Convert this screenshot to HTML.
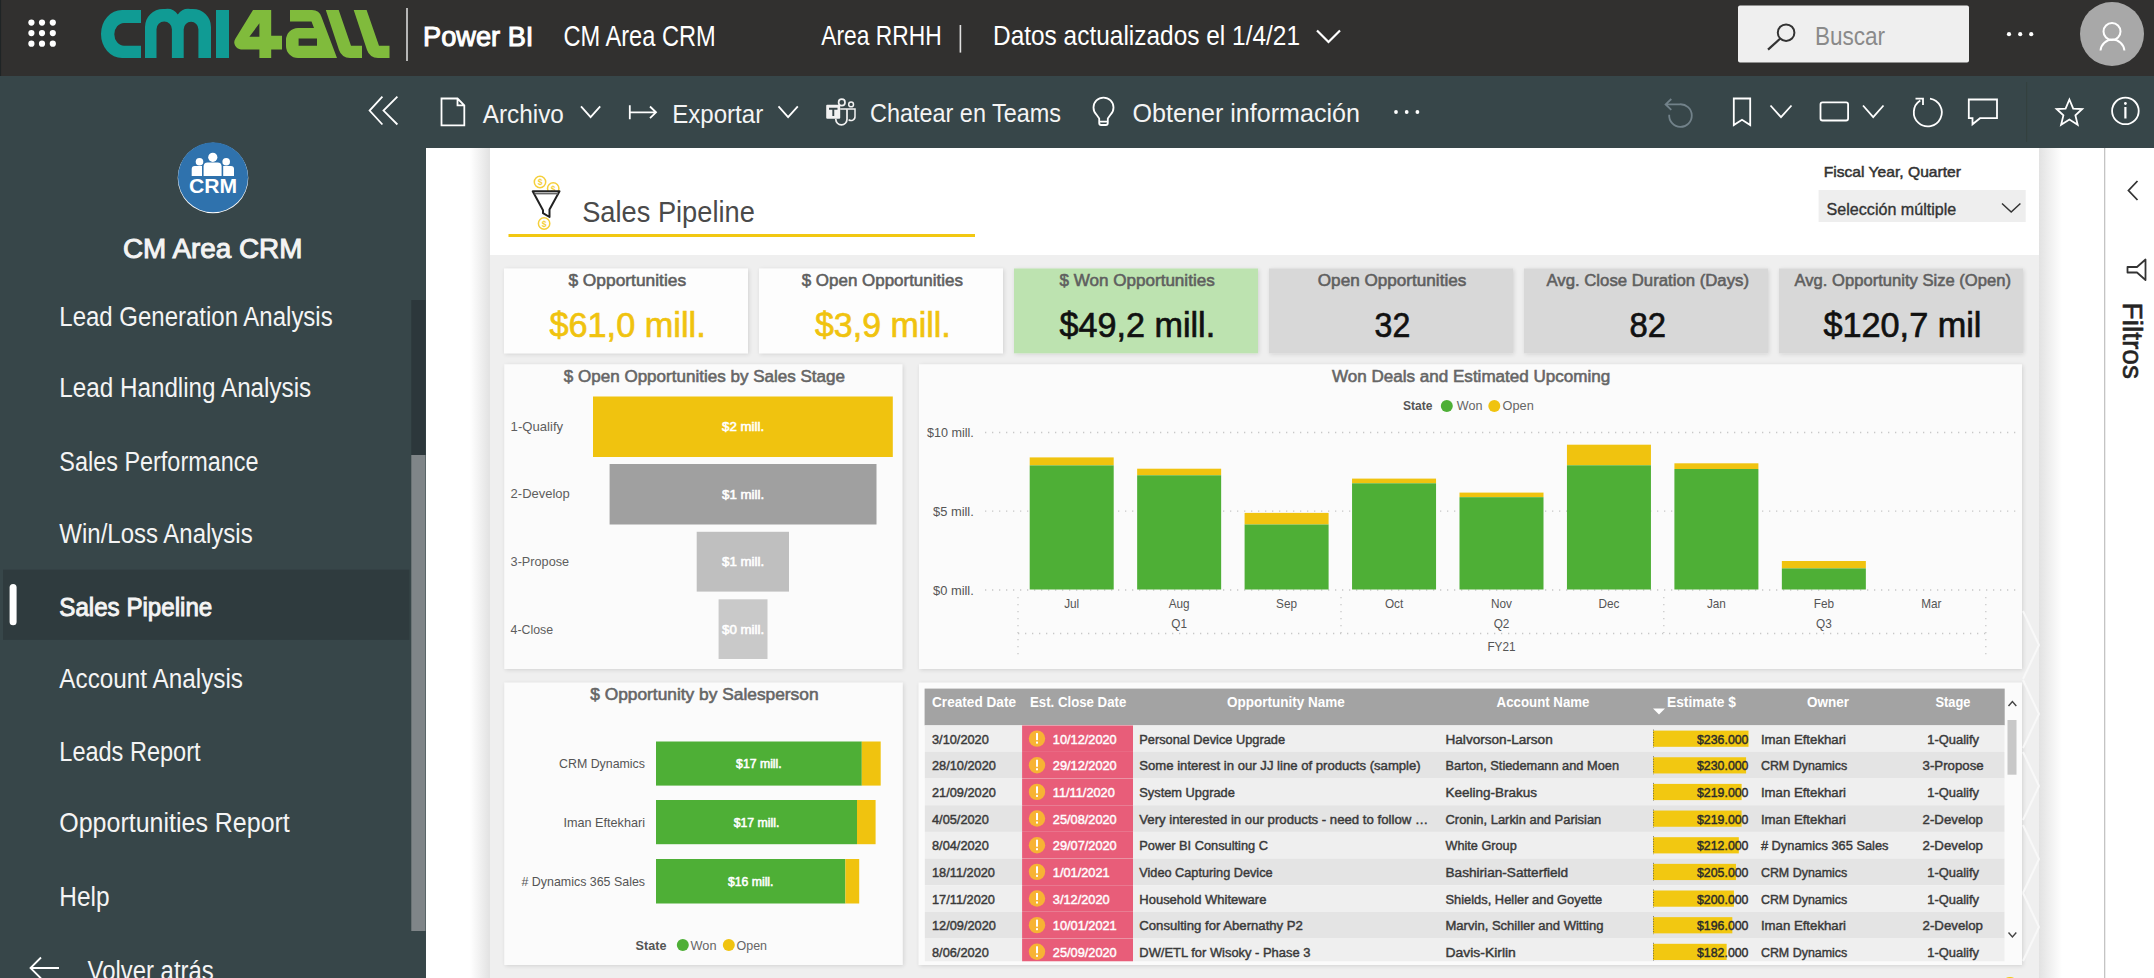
<!DOCTYPE html><html><head><meta charset="utf-8"><style>html,body{margin:0;padding:0;overflow:hidden;background:#fff}
svg{display:block;font-family:"Liberation Sans",sans-serif}</style></head><body>
<svg width="2154" height="978" viewBox="0 0 2154 978">
<rect x="0.00" y="0.00" width="2154.00" height="76.00" fill="#31302f" />
<rect x="0.00" y="0.00" width="1.10" height="978.00" fill="#1f2425" />
<rect x="0.00" y="76.00" width="2154.00" height="72.00" fill="#374649" />
<rect x="0.00" y="148.00" width="426.00" height="830.00" fill="#374649" />
<rect x="426.00" y="148.00" width="1728.00" height="830.00" fill="#ffffff" />
<circle cx="31.4" cy="22.6" r="3.1" fill="#fff"/>
<circle cx="31.4" cy="33.1" r="3.1" fill="#fff"/>
<circle cx="31.4" cy="43.7" r="3.1" fill="#fff"/>
<circle cx="42" cy="22.6" r="3.1" fill="#fff"/>
<circle cx="42" cy="33.1" r="3.1" fill="#fff"/>
<circle cx="42" cy="43.7" r="3.1" fill="#fff"/>
<circle cx="52.8" cy="22.6" r="3.1" fill="#fff"/>
<circle cx="52.8" cy="33.1" r="3.1" fill="#fff"/>
<circle cx="52.8" cy="43.7" r="3.1" fill="#fff"/>
<g fill="#109b94">
<path d="M141,10 H122 A21,24 0 0 0 101,34 A21,24 0 0 0 122,58 H141 V45.8 H124 A10,11.5 0 0 1 114.3,34.3 A10,11.5 0 0 1 124,22.9 H141 Z"/>
<path d="M145,58 V27 A18,18 0 0 1 163,9 H165 A13,13 0 0 1 177.8,14.5 A13,13 0 0 1 190.5,9 H193 A18,18 0 0 1 211,27 V58 H198.4 V29.2 A7.35,7.35 0 0 0 183.7,29.2 V58 H171.9 V29.2 A7.7,7.7 0 0 0 156.5,29.2 V58 Z"/>
<rect x="216" y="10" width="13" height="48"/>
</g>
<g fill="#80bb3c">
<path d="M253,10 H271.2 V35.8 H282 V49.4 H271.2 V58 H259.4 V49.4 H241 A7,7 0 0 1 235.5,38.5 Z M249.4,36.8 H259.4 V23.3 Z" fill-rule="evenodd"/>
<path d="M290,10 H312 A10,10 0 0 1 321.5,17 L337,58 H298 A12,12 0 0 1 286,46 V40 A12,12 0 0 1 298,28 H314 L311.5,21.5 H290 Z M298.6,38.6 H317 V45.8 H298.6 Z" fill-rule="evenodd"/>
<path d="M325.8,10 H338.7 L351,45.8 H362 V58 H350 A12,12 0 0 1 339,50 Z"/>
<path d="M353.7,10 H366.6 L379,45.8 H389.5 V58 H378 A12,12 0 0 1 367,50 Z"/>
</g>
<rect x="406.20" y="8.00" width="1.60" height="53.00" fill="#d8d8d8" />
<text x="423.00" y="45.50" font-size="27.62" fill="#fff" textLength="110.40" lengthAdjust="spacingAndGlyphs" stroke="#fff" stroke-width="1.0">Power BI</text>
<text x="563.40" y="45.50" font-size="28.63" fill="#fff" textLength="152.30" lengthAdjust="spacingAndGlyphs" >CM Area CRM</text>
<text x="821.30" y="44.80" font-size="26.89" fill="#fff" textLength="120.30" lengthAdjust="spacingAndGlyphs" >Area RRHH</text>
<rect x="959.60" y="25.00" width="1.60" height="27.60" fill="#e0e0e0" />
<text x="993.00" y="44.80" font-size="26.89" fill="#fff" textLength="307.00" lengthAdjust="spacingAndGlyphs" >Datos actualizados el 1/4/21</text>
<polyline points="1317,30.5 1328.5,42 1340,30.5" fill="none" stroke="#fff" stroke-width="2.2"/>
<rect x="1738" y="5.4" width="231" height="57" rx="2" fill="#efefef"/>
<circle cx="1786.1" cy="32.7" r="8.3" fill="none" stroke="#333" stroke-width="2"/>
<line x1="1780" y1="38.8" x2="1768" y2="49.6" stroke="#333" stroke-width="2.2"/>
<text x="1815.00" y="44.60" font-size="25.73" fill="#8a8a8a" textLength="70.10" lengthAdjust="spacingAndGlyphs" >Buscar</text>
<circle cx="2009" cy="34.2" r="2.1" fill="#fff"/>
<circle cx="2020.2" cy="34.2" r="2.1" fill="#fff"/>
<circle cx="2031.2" cy="34.2" r="2.1" fill="#fff"/>
<circle cx="2112" cy="34" r="32" fill="#a8a8a8"/>
<circle cx="2112" cy="31.5" r="8.5" fill="none" stroke="#fff" stroke-width="2"/>
<path d="M2100.5,50.5 A12,12 0 0 1 2124.4,50.5" fill="none" stroke="#fff" stroke-width="2"/>
<g fill="none" stroke="#fff" stroke-width="1.8">
<polyline points="382.4,96.7 369.6,110.6 382.4,124.5"/><polyline points="397.4,96.7 383.5,110.6 397.4,124.5"/>
<path d="M441.5,98.5 H457.5 L464.3,105.3 V125.3 H441.5 Z M457.5,98.5 V105.3 H464.3"/>
<polyline points="581,106.4 590.6,117.2 600.2,106.4"/>
<path d="M629.8,105.3 V119.2 M629.8,112.3 H656 M650,106.5 L656,112.3 L650,118.1"/>
<polyline points="778.5,106.4 788.1,117.2 797.8,106.4"/>
<path d="M1096.4,114.6 A10,10 0 1 1 1110.6,114.6 L1107.8,118.5 V123 A2,2 0 0 1 1105.8,125 H1101.2 A2,2 0 0 1 1099.2,123 V118.5 Z M1099.2,121.6 H1107.8"/>
</g>
<text x="482.80" y="122.60" font-size="25.29" fill="#f4f4f4" textLength="81.10" lengthAdjust="spacingAndGlyphs" >Archivo</text>
<text x="672.20" y="122.60" font-size="25.29" fill="#f4f4f4" textLength="91.00" lengthAdjust="spacingAndGlyphs" >Exportar</text>
<text x="870.00" y="122.20" font-size="25.29" fill="#f4f4f4" textLength="191.00" lengthAdjust="spacingAndGlyphs" >Chatear en Teams</text>
<text x="1132.60" y="122.20" font-size="25.29" fill="#f4f4f4" textLength="227.40" lengthAdjust="spacingAndGlyphs" >Obtener información</text>
<g fill="none" stroke="#f2f2f2">
<rect x="826.2" y="104.8" width="14" height="14" rx="1" fill="#f2f2f2" stroke="none"/>
<circle cx="841.8" cy="102.4" r="3.2" stroke-width="1.7"/>
<circle cx="851.1" cy="104.4" r="2.4" stroke-width="1.5"/>
<path d="M840.2,109 H847 V119.3 A5.6,5.6 0 0 1 835.8,119.3 V118.8" stroke-width="1.7"/>
<path d="M847.6,109 H855 V116.3 A3.9,3.9 0 0 1 848.6,119.6" stroke-width="1.5"/>
<path d="M829,108.7 H837.5 M833.3,108.7 V116" stroke="#374649" stroke-width="1.9"/>
</g>
<circle cx="1396" cy="112" r="1.9" fill="#fff"/>
<circle cx="1406.7" cy="112" r="1.9" fill="#fff"/>
<circle cx="1417.4" cy="112" r="1.9" fill="#fff"/>
<g fill="none" stroke="#fff" stroke-width="1.8">
<path d="M1733.8,98.5 H1750.2 V125 L1742,119.8 L1733.8,125 Z"/>
<polyline points="1770.5,105.5 1781,117.2 1791.5,105.5"/>
<rect x="1820.5" y="102.3" width="27.6" height="18.2" rx="2"/>
<polyline points="1863,105.5 1873.2,117.2 1883.5,105.5"/>
<path d="M1930,98.6 A14,14 0 1 1 1920.3,100.6 M1915.5,98.7 H1923 V105"/>
<path d="M1968.8,99.5 H1997 V118.2 H1980 L1972.5,124.3 V118.2 H1968.8 Z"/>
<path d="M2069.4,99.5 L2073.2,108.6 L2082.2,109 L2075.4,115.4 L2077.7,124.8 L2069.4,119.6 L2061.1,124.8 L2063.4,115.4 L2056.6,109 L2065.6,108.6 Z"/>
<circle cx="2125.4" cy="110.9" r="13.3"/>
</g>
<path d="M2125.4,107 V118.5" stroke="#fff" stroke-width="2.2"/><circle cx="2125.4" cy="103.5" r="1.4" fill="#fff"/>
<path d="M1669.2,114.8 A11.3,11.3 0 1 0 1679.6,104.3 H1666 M1671.3,99 L1665.6,104.4 L1671.3,109.8" fill="none" stroke="#72828a" stroke-width="1.8"/>
<rect x="2026.00" y="82.00" width="1.20" height="60.00" fill="#33403f" />
<circle cx="213" cy="178" r="35.3" fill="#fff"/>
<circle cx="213" cy="177.3" r="35" fill="#2f72ad"/>
<g fill="#fff"><circle cx="212.8" cy="157.3" r="4.6"/><circle cx="199.5" cy="161.8" r="3.8"/><circle cx="226.2" cy="161.8" r="3.8"/>
<path d="M203.6,176 V166 A4,4 0 0 1 207.6,162.6 H217.6 A4,4 0 0 1 221.6,166 V176 Z"/>
<path d="M191.7,176 V169 A3,3 0 0 1 194.7,166 H202 V176 Z"/><path d="M223.2,176 V166 H231 A3,3 0 0 1 234,169 V176 Z"/></g>
<text x="189.10" y="193.00" font-size="20.78" font-weight="bold" fill="#fff" textLength="48.10" lengthAdjust="spacingAndGlyphs" >CRM</text>
<text x="123.00" y="257.50" font-size="27.62" fill="#f4f4f4" textLength="179.40" lengthAdjust="spacingAndGlyphs" stroke="#f4f4f4" stroke-width="1.0">CM Area CRM</text>
<rect x="3.00" y="569.70" width="406.40" height="70.10" fill="#2f3b3e" />
<rect x="9.6" y="584" width="7" height="41.3" rx="3.5" fill="#fff"/>
<text x="59.30" y="325.60" font-size="26.74" fill="#f4f4f4" textLength="273.40" lengthAdjust="spacingAndGlyphs" >Lead Generation Analysis</text>
<text x="59.30" y="397.00" font-size="26.74" fill="#f4f4f4" textLength="251.90" lengthAdjust="spacingAndGlyphs" >Lead Handling Analysis</text>
<text x="59.30" y="470.60" font-size="26.74" fill="#f4f4f4" textLength="199.20" lengthAdjust="spacingAndGlyphs" >Sales Performance</text>
<text x="59.30" y="543.00" font-size="26.74" fill="#f4f4f4" textLength="193.40" lengthAdjust="spacingAndGlyphs" >Win/Loss Analysis</text>
<text x="59.30" y="615.70" font-size="25.87" fill="#f4f4f4" textLength="153.00" lengthAdjust="spacingAndGlyphs" stroke="#f4f4f4" stroke-width="0.95">Sales Pipeline</text>
<text x="59.30" y="688.00" font-size="26.74" fill="#f4f4f4" textLength="183.70" lengthAdjust="spacingAndGlyphs" >Account Analysis</text>
<text x="59.30" y="761.00" font-size="26.74" fill="#f4f4f4" textLength="141.20" lengthAdjust="spacingAndGlyphs" >Leads Report</text>
<text x="59.30" y="832.40" font-size="26.74" fill="#f4f4f4" textLength="230.50" lengthAdjust="spacingAndGlyphs" >Opportunities Report</text>
<text x="59.30" y="905.50" font-size="26.74" fill="#f4f4f4" textLength="50.20" lengthAdjust="spacingAndGlyphs" >Help</text>
<path d="M59,968 H31 M41,957.5 L30.5,968 L41,978.5" fill="none" stroke="#fff" stroke-width="1.8"/>
<text x="87.60" y="980.00" font-size="26.74" fill="#f4f4f4" textLength="126.10" lengthAdjust="spacingAndGlyphs" >Volver atrás</text>
<rect x="411.30" y="300.00" width="14.20" height="155.00" fill="#2c373b" />
<rect x="411.30" y="455.00" width="14.20" height="476.00" fill="#7f8588" />
<defs><linearGradient id="shl" x1="0" x2="1"><stop offset="0" stop-color="#fff"/><stop offset="1" stop-color="#e2e2e2"/></linearGradient><linearGradient id="shr" x1="0" x2="1"><stop offset="0" stop-color="#e2e2e2"/><stop offset="1" stop-color="#fff"/></linearGradient><filter id="sh" x="-5%" y="-5%" width="110%" height="115%"><feGaussianBlur in="SourceAlpha" stdDeviation="2.2"/><feOffset dx="0.5" dy="1"/><feComponentTransfer><feFuncA type="linear" slope="0.13"/></feComponentTransfer><feMerge><feMergeNode/><feMergeNode in="SourceGraphic"/></feMerge></filter></defs>
<rect x="470.00" y="148.00" width="20.00" height="830.00" fill="url(#shl)" />
<rect x="2039.00" y="148.00" width="23.00" height="830.00" fill="url(#shr)" />
<rect x="490.00" y="148.00" width="1549.00" height="107.00" fill="#ffffff" />
<rect x="490.00" y="255.00" width="1549.00" height="723.00" fill="#efefef" />
<rect x="2104.00" y="148.00" width="1.30" height="830.00" fill="#c4c4c4" />
<polyline points="2137.5,181 2128.5,190.5 2137.5,200" fill="none" stroke="#333" stroke-width="1.8"/>
<path d="M2145.5,259.5 V280 L2137,272.5 H2127.5 V267 H2137 Z" fill="none" stroke="#333" stroke-width="1.8" stroke-linejoin="round"/>
<text transform="translate(2122.6,302.5) rotate(90)" font-size="28.5" fill="#252423" stroke="#252423" stroke-width="0.6" textLength="76.5" lengthAdjust="spacingAndGlyphs">Filtros</text>
<g>
<circle cx="540" cy="182" r="5.7" fill="#fff" stroke="#f5cf3a" stroke-width="1.5"/>
<text x="540" y="185.3" font-size="8.5" font-weight="bold" fill="#f5cf3a" text-anchor="middle">$</text>
<circle cx="553.2" cy="188.5" r="5.7" fill="#fff" stroke="#f5cf3a" stroke-width="1.5"/>
<text x="553.2" y="191.8" font-size="8.5" font-weight="bold" fill="#f5cf3a" text-anchor="middle">$</text>
<circle cx="544.1" cy="223.5" r="5.7" fill="#fff" stroke="#f5cf3a" stroke-width="1.5"/>
<text x="544.1" y="226.8" font-size="8.5" font-weight="bold" fill="#f5cf3a" text-anchor="middle">$</text>
<path d="M532.7,191.3 H559.5 L549.5,209.5 V217 L543,213.2 V210.2 Z" fill="#fff" stroke="#222" stroke-width="2" stroke-linejoin="round"/>
<line x1="534.5" y1="193.6" x2="558" y2="193.6" stroke="#666" stroke-width="1.6"/>
</g>
<text x="582.20" y="221.70" font-size="29.80" fill="#4a4a4a" textLength="172.60" lengthAdjust="spacingAndGlyphs" >Sales Pipeline</text>
<rect x="508.50" y="234.00" width="466.50" height="3.00" fill="#f2c811" />
<text x="1823.70" y="176.80" font-size="14.97" fill="#333" textLength="137.30" lengthAdjust="spacingAndGlyphs" stroke="#333" stroke-width="0.5">Fiscal Year, Quarter</text>
<rect x="1818.60" y="190.00" width="207.10" height="32.00" fill="#eeeeee" />
<text x="1826.60" y="215.00" font-size="16.28" fill="#333" textLength="129.70" lengthAdjust="spacingAndGlyphs" stroke="#333" stroke-width="0.35">Selección múltiple</text>
<polyline points="2002,203.5 2011.2,212 2020.4,203.5" fill="none" stroke="#333" stroke-width="1.5"/>
<rect x="504" y="268.5" width="244" height="84.8" fill="#fdfdfd" filter="url(#sh)"/>
<text x="568.40" y="285.80" font-size="15.99" fill="#5f5f5f" textLength="117.70" lengthAdjust="spacingAndGlyphs" stroke="#5f5f5f" stroke-width="0.55">$ Opportunities</text>
<text x="549.40" y="336.60" font-size="35.61" fill="#f0c30f" textLength="156.30" lengthAdjust="spacingAndGlyphs" stroke="#f0c30f" stroke-width="0.7">$61,0 mill.</text>
<rect x="759" y="268.5" width="244" height="84.8" fill="#fdfdfd" filter="url(#sh)"/>
<text x="801.70" y="285.80" font-size="15.99" fill="#5f5f5f" textLength="161.20" lengthAdjust="spacingAndGlyphs" stroke="#5f5f5f" stroke-width="0.55">$ Open Opportunities</text>
<text x="815.00" y="336.60" font-size="35.61" fill="#f0c30f" textLength="135.80" lengthAdjust="spacingAndGlyphs" stroke="#f0c30f" stroke-width="0.7">$3,9 mill.</text>
<rect x="1014" y="268.5" width="244" height="84.8" fill="#bde3b0" filter="url(#sh)"/>
<text x="1059.50" y="285.80" font-size="15.99" fill="#5f5f5f" textLength="155.20" lengthAdjust="spacingAndGlyphs" stroke="#5f5f5f" stroke-width="0.55">$ Won Opportunities</text>
<text x="1059.50" y="336.60" font-size="35.61" fill="#111" textLength="155.70" lengthAdjust="spacingAndGlyphs" stroke="#111" stroke-width="0.7">$49,2 mill.</text>
<rect x="1269" y="268.5" width="244" height="84.8" fill="#d8d8d8" filter="url(#sh)"/>
<text x="1317.80" y="285.80" font-size="15.99" fill="#5f5f5f" textLength="148.50" lengthAdjust="spacingAndGlyphs" stroke="#5f5f5f" stroke-width="0.55">Open Opportunities</text>
<text x="1374.60" y="336.60" font-size="35.61" fill="#111" textLength="35.70" lengthAdjust="spacingAndGlyphs" stroke="#111" stroke-width="0.7">32</text>
<rect x="1524" y="268.5" width="244" height="84.8" fill="#d8d8d8" filter="url(#sh)"/>
<text x="1546.40" y="285.80" font-size="15.99" fill="#5f5f5f" textLength="202.60" lengthAdjust="spacingAndGlyphs" stroke="#5f5f5f" stroke-width="0.55">Avg. Close Duration (Days)</text>
<text x="1629.50" y="336.60" font-size="35.61" fill="#111" textLength="36.50" lengthAdjust="spacingAndGlyphs" stroke="#111" stroke-width="0.7">82</text>
<rect x="1779" y="268.5" width="244" height="84.8" fill="#d8d8d8" filter="url(#sh)"/>
<text x="1794.50" y="285.80" font-size="15.99" fill="#5f5f5f" textLength="216.50" lengthAdjust="spacingAndGlyphs" stroke="#5f5f5f" stroke-width="0.55">Avg. Opportunity Size (Open)</text>
<text x="1823.40" y="336.60" font-size="35.61" fill="#111" textLength="158.10" lengthAdjust="spacingAndGlyphs" stroke="#111" stroke-width="0.7">$120,7 mil</text>
<rect x="504.3" y="364.3" width="397.99999999999994" height="304.7" fill="#fbfbfb" filter="url(#sh)"/>
<rect x="919" y="364.3" width="1103" height="304.7" fill="#fbfbfb" filter="url(#sh)"/>
<rect x="504.3" y="682.6" width="398.40000000000003" height="282.4" fill="#fbfbfb" filter="url(#sh)"/>
<rect x="918.6" y="682.6" width="1103.4" height="282.4" fill="#fbfbfb" filter="url(#sh)"/>
<g fill="none" stroke="#f9f9f9" stroke-width="2" opacity="0.9">
<polyline points="2023,611 2039,645 2023,679"/>
<polyline points="2023,680 2039,714 2023,748"/>
<polyline points="2023,752 2039,786 2023,820"/>
<polyline points="2023,825 2039,859 2023,893"/>
<polyline points="2023,893 2039,927 2023,961"/>
</g>
<text x="563.80" y="381.60" font-size="15.99" fill="#666666" textLength="281.20" lengthAdjust="spacingAndGlyphs" stroke="#666" stroke-width="0.55">$ Open Opportunities by Sales Stage</text>
<rect x="593.00" y="396.50" width="299.80" height="60.50" fill="#f0c30f" />
<rect x="609.60" y="464.00" width="266.90" height="60.50" fill="#a0a0a0" />
<rect x="696.70" y="531.80" width="92.30" height="59.80" fill="#bfbfbf" />
<rect x="718.60" y="599.30" width="48.90" height="59.70" fill="#c9c9c9" />
<text x="510.60" y="430.90" font-size="12.94" fill="#5e5e5e" textLength="52.50" lengthAdjust="spacingAndGlyphs" >1-Qualify</text>
<text x="510.60" y="498.40" font-size="12.94" fill="#5e5e5e" textLength="59.20" lengthAdjust="spacingAndGlyphs" >2-Develop</text>
<text x="510.60" y="565.90" font-size="12.94" fill="#5e5e5e" textLength="58.50" lengthAdjust="spacingAndGlyphs" >3-Propose</text>
<text x="510.60" y="633.60" font-size="12.94" fill="#5e5e5e" textLength="42.50" lengthAdjust="spacingAndGlyphs" >4-Close</text>
<text x="722.00" y="431.10" font-size="12.50" fill="#ffffff" textLength="42.20" lengthAdjust="spacingAndGlyphs" stroke="#fff" stroke-width="0.55">$2 mill.</text>
<text x="722.00" y="498.60" font-size="12.50" fill="#ffffff" textLength="42.20" lengthAdjust="spacingAndGlyphs" stroke="#fff" stroke-width="0.55">$1 mill.</text>
<text x="722.00" y="566.10" font-size="12.50" fill="#ffffff" textLength="42.20" lengthAdjust="spacingAndGlyphs" stroke="#fff" stroke-width="0.55">$1 mill.</text>
<text x="722.00" y="633.80" font-size="12.50" fill="#ffffff" textLength="42.20" lengthAdjust="spacingAndGlyphs" stroke="#fff" stroke-width="0.55">$0 mill.</text>
<text x="1332.00" y="381.60" font-size="15.99" fill="#666666" textLength="278.30" lengthAdjust="spacingAndGlyphs" stroke="#666" stroke-width="0.55">Won Deals and Estimated Upcoming</text>
<text x="1403.00" y="410.00" font-size="12.79" font-weight="bold" fill="#555" textLength="29.50" lengthAdjust="spacingAndGlyphs" >State</text>
<circle cx="1446.8" cy="405.9" r="6" fill="#4eaf36"/><circle cx="1494.3" cy="405.9" r="6" fill="#f0c30f"/>
<text x="1456.80" y="410.00" font-size="12.79" fill="#666" textLength="25.60" lengthAdjust="spacingAndGlyphs" >Won</text>
<text x="1502.60" y="410.00" font-size="12.79" fill="#666" textLength="31.20" lengthAdjust="spacingAndGlyphs" >Open</text>
<text x="927.00" y="436.80" font-size="12.79" fill="#555" textLength="46.80" lengthAdjust="spacingAndGlyphs" >$10 mill.</text>
<text x="933.00" y="515.60" font-size="12.79" fill="#555" textLength="40.80" lengthAdjust="spacingAndGlyphs" >$5 mill.</text>
<text x="933.00" y="594.70" font-size="12.79" fill="#555" textLength="40.80" lengthAdjust="spacingAndGlyphs" >$0 mill.</text>
<g stroke="#c8c8c8" stroke-width="1.3" stroke-dasharray="1.3 5.7" fill="none">
<line x1="985" y1="432.5" x2="2020" y2="432.5"/>
<line x1="985" y1="511.2" x2="2020" y2="511.2"/>
<line x1="985" y1="590" x2="2020" y2="590"/>
<line x1="1018" y1="597" x2="1018" y2="660"/><line x1="1341" y1="597" x2="1341" y2="633"/><line x1="1663.8" y1="597" x2="1663.8" y2="633"/><line x1="1985.8" y1="597" x2="1985.8" y2="660"/>
<line x1="1018" y1="633.5" x2="1985.8" y2="633.5"/>
</g>
<rect x="1029.70" y="457.40" width="84.00" height="8.00" fill="#f0c30f" />
<rect x="1029.70" y="465.40" width="84.00" height="124.10" fill="#4eaf36" />
<rect x="1137.15" y="468.70" width="84.00" height="6.60" fill="#f0c30f" />
<rect x="1137.15" y="475.30" width="84.00" height="114.20" fill="#4eaf36" />
<rect x="1244.60" y="512.90" width="84.00" height="11.60" fill="#f0c30f" />
<rect x="1244.60" y="524.50" width="84.00" height="65.00" fill="#4eaf36" />
<rect x="1352.05" y="478.60" width="84.00" height="4.70" fill="#f0c30f" />
<rect x="1352.05" y="483.30" width="84.00" height="106.20" fill="#4eaf36" />
<rect x="1459.50" y="492.60" width="84.00" height="4.60" fill="#f0c30f" />
<rect x="1459.50" y="497.20" width="84.00" height="92.30" fill="#4eaf36" />
<rect x="1566.95" y="444.70" width="84.00" height="20.60" fill="#f0c30f" />
<rect x="1566.95" y="465.30" width="84.00" height="124.20" fill="#4eaf36" />
<rect x="1674.40" y="463.30" width="84.00" height="5.70" fill="#f0c30f" />
<rect x="1674.40" y="469.00" width="84.00" height="120.50" fill="#4eaf36" />
<rect x="1781.85" y="561.00" width="84.00" height="7.40" fill="#f0c30f" />
<rect x="1781.85" y="568.40" width="84.00" height="21.10" fill="#4eaf36" />
<text x="1064.17" y="608.00" font-size="12.80" fill="#555" textLength="15.05" lengthAdjust="spacingAndGlyphs" >Jul</text>
<text x="1168.67" y="608.00" font-size="12.80" fill="#555" textLength="20.95" lengthAdjust="spacingAndGlyphs" >Aug</text>
<text x="1276.12" y="608.00" font-size="12.80" fill="#555" textLength="20.95" lengthAdjust="spacingAndGlyphs" >Sep</text>
<text x="1384.89" y="608.00" font-size="12.80" fill="#555" textLength="18.32" lengthAdjust="spacingAndGlyphs" >Oct</text>
<text x="1491.03" y="608.00" font-size="12.80" fill="#555" textLength="20.94" lengthAdjust="spacingAndGlyphs" >Nov</text>
<text x="1598.48" y="608.00" font-size="12.80" fill="#555" textLength="20.94" lengthAdjust="spacingAndGlyphs" >Dec</text>
<text x="1706.91" y="608.00" font-size="12.80" fill="#555" textLength="18.99" lengthAdjust="spacingAndGlyphs" >Jan</text>
<text x="1813.70" y="608.00" font-size="12.80" fill="#555" textLength="20.29" lengthAdjust="spacingAndGlyphs" >Feb</text>
<text x="1921.16" y="608.00" font-size="12.80" fill="#555" textLength="20.28" lengthAdjust="spacingAndGlyphs" >Mar</text>
<text x="1171.30" y="628.00" font-size="12.80" fill="#555" textLength="15.71" lengthAdjust="spacingAndGlyphs" >Q1</text>
<text x="1493.65" y="628.00" font-size="12.80" fill="#555" textLength="15.71" lengthAdjust="spacingAndGlyphs" >Q2</text>
<text x="1816.00" y="628.00" font-size="12.80" fill="#555" textLength="15.71" lengthAdjust="spacingAndGlyphs" >Q3</text>
<text x="1487.43" y="650.50" font-size="12.80" fill="#555" textLength="28.15" lengthAdjust="spacingAndGlyphs" >FY21</text>
<text x="590.20" y="700.30" font-size="15.99" fill="#666666" textLength="228.40" lengthAdjust="spacingAndGlyphs" stroke="#666" stroke-width="0.55">$ Opportunity by Salesperson</text>
<rect x="656.00" y="741.50" width="205.80" height="44.10" fill="#4eaf36" />
<rect x="861.80" y="741.50" width="18.90" height="44.10" fill="#f0c30f" />
<text x="559.00" y="768.15" font-size="13.37" fill="#555" textLength="86.00" lengthAdjust="spacingAndGlyphs" >CRM Dynamics</text>
<text x="736.09" y="768.05" font-size="12.50" fill="#fff" textLength="45.62" lengthAdjust="spacingAndGlyphs" stroke="#fff" stroke-width="0.55">$17 mill.</text>
<rect x="656.00" y="800.00" width="201.00" height="44.20" fill="#4eaf36" />
<rect x="857.00" y="800.00" width="18.60" height="44.20" fill="#f0c30f" />
<text x="563.50" y="826.70" font-size="13.37" fill="#555" textLength="81.50" lengthAdjust="spacingAndGlyphs" >Iman Eftekhari</text>
<text x="733.69" y="826.60" font-size="12.50" fill="#fff" textLength="45.62" lengthAdjust="spacingAndGlyphs" stroke="#fff" stroke-width="0.55">$17 mill.</text>
<rect x="656.00" y="859.00" width="189.40" height="44.50" fill="#4eaf36" />
<rect x="845.40" y="859.00" width="13.80" height="44.50" fill="#f0c30f" />
<text x="521.50" y="885.85" font-size="13.37" fill="#555" textLength="123.50" lengthAdjust="spacingAndGlyphs" ># Dynamics 365 Sales</text>
<text x="727.89" y="885.75" font-size="12.50" fill="#fff" textLength="45.62" lengthAdjust="spacingAndGlyphs" stroke="#fff" stroke-width="0.55">$16 mill.</text>
<text x="635.60" y="949.50" font-size="13.08" font-weight="bold" fill="#555" textLength="30.80" lengthAdjust="spacingAndGlyphs" >State</text>
<circle cx="682.8" cy="945" r="6" fill="#4eaf36"/><circle cx="728.8" cy="945" r="6" fill="#f0c30f"/>
<text x="690.50" y="949.50" font-size="13.08" fill="#666" textLength="26.00" lengthAdjust="spacingAndGlyphs" >Won</text>
<text x="736.50" y="949.50" font-size="13.08" fill="#666" textLength="30.50" lengthAdjust="spacingAndGlyphs" >Open</text>
<rect x="924.60" y="688.60" width="1080.10" height="36.70" fill="#a3a3a3" />
<text x="932.00" y="707.00" font-size="14.97" font-weight="bold" fill="#ffffff" textLength="84.00" lengthAdjust="spacingAndGlyphs" >Created Date</text>
<text x="1030.00" y="707.00" font-size="14.97" font-weight="bold" fill="#ffffff" textLength="96.30" lengthAdjust="spacingAndGlyphs" >Est. Close Date</text>
<text x="1227.00" y="707.00" font-size="14.97" font-weight="bold" fill="#ffffff" textLength="117.80" lengthAdjust="spacingAndGlyphs" >Opportunity Name</text>
<text x="1496.60" y="707.00" font-size="14.97" font-weight="bold" fill="#ffffff" textLength="92.90" lengthAdjust="spacingAndGlyphs" >Account Name</text>
<text x="1667.00" y="707.00" font-size="14.97" font-weight="bold" fill="#ffffff" textLength="69.00" lengthAdjust="spacingAndGlyphs" >Estimate $</text>
<text x="1807.00" y="707.00" font-size="14.97" font-weight="bold" fill="#ffffff" textLength="42.00" lengthAdjust="spacingAndGlyphs" >Owner</text>
<text x="1935.50" y="707.00" font-size="14.97" font-weight="bold" fill="#ffffff" textLength="35.00" lengthAdjust="spacingAndGlyphs" >Stage</text>
<path d="M1653,708.5 L1665,708.5 L1659,714.5 Z" fill="#fff"/>
<clipPath id="tclip"><rect x="924.6" y="725.3" width="1080.1" height="236"/></clipPath><g clip-path="url(#tclip)">
<rect x="924.60" y="725.30" width="1080.10" height="26.65" fill="#efefef" />
<rect x="1022.10" y="725.30" width="110.90" height="26.65" fill="#e85d79" />
<text x="932.00" y="743.80" font-size="13.37" fill="#3a3a3a" textLength="56.80" lengthAdjust="spacingAndGlyphs" stroke="#3a3a3a" stroke-width="0.45">3/10/2020</text>
<circle cx="1037" cy="738.60" r="8.2" fill="#f7b334"/><rect x="1036" y="733.10" width="2" height="7" fill="#fff"/><rect x="1036" y="741.60" width="2" height="2" fill="#fff"/>
<text x="1052.80" y="743.80" font-size="13.37" fill="#fff" textLength="63.91" lengthAdjust="spacingAndGlyphs" stroke="#fff" stroke-width="0.45">10/12/2020</text>
<text x="1139.30" y="743.80" font-size="13.37" fill="#3a3a3a" stroke="#3a3a3a" stroke-width="0.45" textLength="145.70" lengthAdjust="spacingAndGlyphs">Personal Device Upgrade</text>
<text x="1445.50" y="743.80" font-size="13.37" fill="#3a3a3a" stroke="#3a3a3a" stroke-width="0.45" textLength="107.20" lengthAdjust="spacingAndGlyphs">Halvorson-Larson</text>
<rect x="1653.00" y="730.60" width="95.51" height="16.20" fill="#f2c811" />
<line x1="1653.5" y1="729.60" x2="1653.5" y2="747.60" stroke="#555" stroke-width="0.8" stroke-dasharray="1 1.5"/>
<text x="1697.00" y="743.80" font-size="13.37" fill="#2a2a2a" stroke="#2a2a2a" stroke-width="0.45" textLength="51.50" lengthAdjust="spacingAndGlyphs">$236.000</text>
<text x="1760.90" y="743.80" font-size="13.37" fill="#3a3a3a" stroke="#3a3a3a" stroke-width="0.45" textLength="85.10" lengthAdjust="spacingAndGlyphs">Iman Eftekhari</text>
<text x="1927.20" y="743.80" font-size="13.37" fill="#3a3a3a" stroke="#3a3a3a" stroke-width="0.45" textLength="51.80" lengthAdjust="spacingAndGlyphs">1-Qualify</text>
<rect x="924.60" y="751.95" width="1080.10" height="26.65" fill="#e4e4e4" />
<rect x="1022.10" y="751.95" width="110.90" height="26.65" fill="#e85d79" />
<text x="932.00" y="770.45" font-size="13.37" fill="#3a3a3a" textLength="63.91" lengthAdjust="spacingAndGlyphs" stroke="#3a3a3a" stroke-width="0.45">28/10/2020</text>
<circle cx="1037" cy="765.25" r="8.2" fill="#f7b334"/><rect x="1036" y="759.75" width="2" height="7" fill="#fff"/><rect x="1036" y="768.25" width="2" height="2" fill="#fff"/>
<text x="1052.80" y="770.45" font-size="13.37" fill="#fff" textLength="63.91" lengthAdjust="spacingAndGlyphs" stroke="#fff" stroke-width="0.45">29/12/2020</text>
<text x="1139.30" y="770.45" font-size="13.37" fill="#3a3a3a" stroke="#3a3a3a" stroke-width="0.45" textLength="281.40" lengthAdjust="spacingAndGlyphs">Some interest in our JJ line of products (sample)</text>
<text x="1445.50" y="770.45" font-size="13.37" fill="#3a3a3a" stroke="#3a3a3a" stroke-width="0.45" textLength="173.50" lengthAdjust="spacingAndGlyphs">Barton, Stiedemann and Moen</text>
<rect x="1653.00" y="757.25" width="93.08" height="16.20" fill="#f2c811" />
<line x1="1653.5" y1="756.25" x2="1653.5" y2="774.25" stroke="#555" stroke-width="0.8" stroke-dasharray="1 1.5"/>
<text x="1697.00" y="770.45" font-size="13.37" fill="#2a2a2a" stroke="#2a2a2a" stroke-width="0.45" textLength="51.50" lengthAdjust="spacingAndGlyphs">$230.000</text>
<text x="1760.90" y="770.45" font-size="13.37" fill="#3a3a3a" stroke="#3a3a3a" stroke-width="0.45" textLength="86.40" lengthAdjust="spacingAndGlyphs">CRM Dynamics</text>
<text x="1922.60" y="770.45" font-size="13.37" fill="#3a3a3a" stroke="#3a3a3a" stroke-width="0.45" textLength="61.00" lengthAdjust="spacingAndGlyphs">3-Propose</text>
<rect x="924.60" y="778.60" width="1080.10" height="26.65" fill="#efefef" />
<rect x="1022.10" y="778.60" width="110.90" height="26.65" fill="#e85d79" />
<text x="932.00" y="797.10" font-size="13.37" fill="#3a3a3a" textLength="63.91" lengthAdjust="spacingAndGlyphs" stroke="#3a3a3a" stroke-width="0.45">21/09/2020</text>
<circle cx="1037" cy="791.90" r="8.2" fill="#f7b334"/><rect x="1036" y="786.40" width="2" height="7" fill="#fff"/><rect x="1036" y="794.90" width="2" height="2" fill="#fff"/>
<text x="1052.80" y="797.10" font-size="13.37" fill="#fff" textLength="62.01" lengthAdjust="spacingAndGlyphs" stroke="#fff" stroke-width="0.45">11/11/2020</text>
<text x="1139.30" y="797.10" font-size="13.37" fill="#3a3a3a" stroke="#3a3a3a" stroke-width="0.45" textLength="95.50" lengthAdjust="spacingAndGlyphs">System Upgrade</text>
<text x="1445.50" y="797.10" font-size="13.37" fill="#3a3a3a" stroke="#3a3a3a" stroke-width="0.45" textLength="91.40" lengthAdjust="spacingAndGlyphs">Keeling-Brakus</text>
<rect x="1653.00" y="783.90" width="88.63" height="16.20" fill="#f2c811" />
<line x1="1653.5" y1="782.90" x2="1653.5" y2="800.90" stroke="#555" stroke-width="0.8" stroke-dasharray="1 1.5"/>
<text x="1697.00" y="797.10" font-size="13.37" fill="#2a2a2a" stroke="#2a2a2a" stroke-width="0.45" textLength="51.50" lengthAdjust="spacingAndGlyphs">$219.000</text>
<text x="1760.90" y="797.10" font-size="13.37" fill="#3a3a3a" stroke="#3a3a3a" stroke-width="0.45" textLength="85.10" lengthAdjust="spacingAndGlyphs">Iman Eftekhari</text>
<text x="1927.20" y="797.10" font-size="13.37" fill="#3a3a3a" stroke="#3a3a3a" stroke-width="0.45" textLength="51.80" lengthAdjust="spacingAndGlyphs">1-Qualify</text>
<rect x="924.60" y="805.25" width="1080.10" height="26.65" fill="#e4e4e4" />
<rect x="1022.10" y="805.25" width="110.90" height="26.65" fill="#e85d79" />
<text x="932.00" y="823.75" font-size="13.37" fill="#3a3a3a" textLength="56.80" lengthAdjust="spacingAndGlyphs" stroke="#3a3a3a" stroke-width="0.45">4/05/2020</text>
<circle cx="1037" cy="818.55" r="8.2" fill="#f7b334"/><rect x="1036" y="813.05" width="2" height="7" fill="#fff"/><rect x="1036" y="821.55" width="2" height="2" fill="#fff"/>
<text x="1052.80" y="823.75" font-size="13.37" fill="#fff" textLength="63.91" lengthAdjust="spacingAndGlyphs" stroke="#fff" stroke-width="0.45">25/08/2020</text>
<text x="1139.30" y="823.75" font-size="13.37" fill="#3a3a3a" stroke="#3a3a3a" stroke-width="0.45" textLength="288.80" lengthAdjust="spacingAndGlyphs">Very interested in our products - need to follow …</text>
<text x="1445.50" y="823.75" font-size="13.37" fill="#3a3a3a" stroke="#3a3a3a" stroke-width="0.45" textLength="155.80" lengthAdjust="spacingAndGlyphs">Cronin, Larkin and Parisian</text>
<rect x="1653.00" y="810.55" width="88.63" height="16.20" fill="#f2c811" />
<line x1="1653.5" y1="809.55" x2="1653.5" y2="827.55" stroke="#555" stroke-width="0.8" stroke-dasharray="1 1.5"/>
<text x="1697.00" y="823.75" font-size="13.37" fill="#2a2a2a" stroke="#2a2a2a" stroke-width="0.45" textLength="51.50" lengthAdjust="spacingAndGlyphs">$219.000</text>
<text x="1760.90" y="823.75" font-size="13.37" fill="#3a3a3a" stroke="#3a3a3a" stroke-width="0.45" textLength="85.10" lengthAdjust="spacingAndGlyphs">Iman Eftekhari</text>
<text x="1922.60" y="823.75" font-size="13.37" fill="#3a3a3a" stroke="#3a3a3a" stroke-width="0.45" textLength="60.40" lengthAdjust="spacingAndGlyphs">2-Develop</text>
<rect x="924.60" y="831.90" width="1080.10" height="26.65" fill="#efefef" />
<rect x="1022.10" y="831.90" width="110.90" height="26.65" fill="#e85d79" />
<text x="932.00" y="850.40" font-size="13.37" fill="#3a3a3a" textLength="56.80" lengthAdjust="spacingAndGlyphs" stroke="#3a3a3a" stroke-width="0.45">8/04/2020</text>
<circle cx="1037" cy="845.20" r="8.2" fill="#f7b334"/><rect x="1036" y="839.70" width="2" height="7" fill="#fff"/><rect x="1036" y="848.20" width="2" height="2" fill="#fff"/>
<text x="1052.80" y="850.40" font-size="13.37" fill="#fff" textLength="63.91" lengthAdjust="spacingAndGlyphs" stroke="#fff" stroke-width="0.45">29/07/2020</text>
<text x="1139.30" y="850.40" font-size="13.37" fill="#3a3a3a" stroke="#3a3a3a" stroke-width="0.45" textLength="128.60" lengthAdjust="spacingAndGlyphs">Power BI Consulting C</text>
<text x="1445.50" y="850.40" font-size="13.37" fill="#3a3a3a" stroke="#3a3a3a" stroke-width="0.45" textLength="71.20" lengthAdjust="spacingAndGlyphs">White Group</text>
<rect x="1653.00" y="837.20" width="85.80" height="16.20" fill="#f2c811" />
<line x1="1653.5" y1="836.20" x2="1653.5" y2="854.20" stroke="#555" stroke-width="0.8" stroke-dasharray="1 1.5"/>
<text x="1697.00" y="850.40" font-size="13.37" fill="#2a2a2a" stroke="#2a2a2a" stroke-width="0.45" textLength="51.50" lengthAdjust="spacingAndGlyphs">$212.000</text>
<text x="1760.90" y="850.40" font-size="13.37" fill="#3a3a3a" stroke="#3a3a3a" stroke-width="0.45" textLength="127.60" lengthAdjust="spacingAndGlyphs"># Dynamics 365 Sales</text>
<text x="1922.60" y="850.40" font-size="13.37" fill="#3a3a3a" stroke="#3a3a3a" stroke-width="0.45" textLength="60.40" lengthAdjust="spacingAndGlyphs">2-Develop</text>
<rect x="924.60" y="858.55" width="1080.10" height="26.65" fill="#e4e4e4" />
<rect x="1022.10" y="858.55" width="110.90" height="26.65" fill="#e85d79" />
<text x="932.00" y="877.05" font-size="13.37" fill="#3a3a3a" textLength="62.96" lengthAdjust="spacingAndGlyphs" stroke="#3a3a3a" stroke-width="0.45">18/11/2020</text>
<circle cx="1037" cy="871.85" r="8.2" fill="#f7b334"/><rect x="1036" y="866.35" width="2" height="7" fill="#fff"/><rect x="1036" y="874.85" width="2" height="2" fill="#fff"/>
<text x="1052.80" y="877.05" font-size="13.37" fill="#fff" textLength="56.80" lengthAdjust="spacingAndGlyphs" stroke="#fff" stroke-width="0.45">1/01/2021</text>
<text x="1139.30" y="877.05" font-size="13.37" fill="#3a3a3a" stroke="#3a3a3a" stroke-width="0.45" textLength="133.30" lengthAdjust="spacingAndGlyphs">Video Capturing Device</text>
<text x="1445.50" y="877.05" font-size="13.37" fill="#3a3a3a" stroke="#3a3a3a" stroke-width="0.45" textLength="122.70" lengthAdjust="spacingAndGlyphs">Bashirian-Satterfield</text>
<rect x="1653.00" y="863.85" width="82.96" height="16.20" fill="#f2c811" />
<line x1="1653.5" y1="862.85" x2="1653.5" y2="880.85" stroke="#555" stroke-width="0.8" stroke-dasharray="1 1.5"/>
<text x="1697.00" y="877.05" font-size="13.37" fill="#2a2a2a" stroke="#2a2a2a" stroke-width="0.45" textLength="51.50" lengthAdjust="spacingAndGlyphs">$205.000</text>
<text x="1760.90" y="877.05" font-size="13.37" fill="#3a3a3a" stroke="#3a3a3a" stroke-width="0.45" textLength="86.40" lengthAdjust="spacingAndGlyphs">CRM Dynamics</text>
<text x="1927.20" y="877.05" font-size="13.37" fill="#3a3a3a" stroke="#3a3a3a" stroke-width="0.45" textLength="51.80" lengthAdjust="spacingAndGlyphs">1-Qualify</text>
<rect x="924.60" y="885.20" width="1080.10" height="26.65" fill="#efefef" />
<rect x="1022.10" y="885.20" width="110.90" height="26.65" fill="#e85d79" />
<text x="932.00" y="903.70" font-size="13.37" fill="#3a3a3a" textLength="62.96" lengthAdjust="spacingAndGlyphs" stroke="#3a3a3a" stroke-width="0.45">17/11/2020</text>
<circle cx="1037" cy="898.50" r="8.2" fill="#f7b334"/><rect x="1036" y="893.00" width="2" height="7" fill="#fff"/><rect x="1036" y="901.50" width="2" height="2" fill="#fff"/>
<text x="1052.80" y="903.70" font-size="13.37" fill="#fff" textLength="56.80" lengthAdjust="spacingAndGlyphs" stroke="#fff" stroke-width="0.45">3/12/2020</text>
<text x="1139.30" y="903.70" font-size="13.37" fill="#3a3a3a" stroke="#3a3a3a" stroke-width="0.45" textLength="127.10" lengthAdjust="spacingAndGlyphs">Household Whiteware</text>
<text x="1445.50" y="903.70" font-size="13.37" fill="#3a3a3a" stroke="#3a3a3a" stroke-width="0.45" textLength="156.70" lengthAdjust="spacingAndGlyphs">Shields, Heller and Goyette</text>
<rect x="1653.00" y="890.50" width="80.94" height="16.20" fill="#f2c811" />
<line x1="1653.5" y1="889.50" x2="1653.5" y2="907.50" stroke="#555" stroke-width="0.8" stroke-dasharray="1 1.5"/>
<text x="1697.00" y="903.70" font-size="13.37" fill="#2a2a2a" stroke="#2a2a2a" stroke-width="0.45" textLength="51.50" lengthAdjust="spacingAndGlyphs">$200.000</text>
<text x="1760.90" y="903.70" font-size="13.37" fill="#3a3a3a" stroke="#3a3a3a" stroke-width="0.45" textLength="86.40" lengthAdjust="spacingAndGlyphs">CRM Dynamics</text>
<text x="1927.20" y="903.70" font-size="13.37" fill="#3a3a3a" stroke="#3a3a3a" stroke-width="0.45" textLength="51.80" lengthAdjust="spacingAndGlyphs">1-Qualify</text>
<rect x="924.60" y="911.85" width="1080.10" height="26.65" fill="#e4e4e4" />
<rect x="1022.10" y="911.85" width="110.90" height="26.65" fill="#e85d79" />
<text x="932.00" y="930.35" font-size="13.37" fill="#3a3a3a" textLength="63.91" lengthAdjust="spacingAndGlyphs" stroke="#3a3a3a" stroke-width="0.45">12/09/2020</text>
<circle cx="1037" cy="925.15" r="8.2" fill="#f7b334"/><rect x="1036" y="919.65" width="2" height="7" fill="#fff"/><rect x="1036" y="928.15" width="2" height="2" fill="#fff"/>
<text x="1052.80" y="930.35" font-size="13.37" fill="#fff" textLength="63.91" lengthAdjust="spacingAndGlyphs" stroke="#fff" stroke-width="0.45">10/01/2021</text>
<text x="1139.30" y="930.35" font-size="13.37" fill="#3a3a3a" stroke="#3a3a3a" stroke-width="0.45" textLength="163.60" lengthAdjust="spacingAndGlyphs">Consulting for Abernathy P2</text>
<text x="1445.50" y="930.35" font-size="13.37" fill="#3a3a3a" stroke="#3a3a3a" stroke-width="0.45" textLength="158.00" lengthAdjust="spacingAndGlyphs">Marvin, Schiller and Witting</text>
<rect x="1653.00" y="917.15" width="79.32" height="16.20" fill="#f2c811" />
<line x1="1653.5" y1="916.15" x2="1653.5" y2="934.15" stroke="#555" stroke-width="0.8" stroke-dasharray="1 1.5"/>
<text x="1697.00" y="930.35" font-size="13.37" fill="#2a2a2a" stroke="#2a2a2a" stroke-width="0.45" textLength="51.50" lengthAdjust="spacingAndGlyphs">$196.000</text>
<text x="1760.90" y="930.35" font-size="13.37" fill="#3a3a3a" stroke="#3a3a3a" stroke-width="0.45" textLength="85.10" lengthAdjust="spacingAndGlyphs">Iman Eftekhari</text>
<text x="1922.60" y="930.35" font-size="13.37" fill="#3a3a3a" stroke="#3a3a3a" stroke-width="0.45" textLength="60.40" lengthAdjust="spacingAndGlyphs">2-Develop</text>
<rect x="924.60" y="938.50" width="1080.10" height="26.65" fill="#efefef" />
<rect x="1022.10" y="938.50" width="110.90" height="26.65" fill="#e85d79" />
<text x="932.00" y="957.00" font-size="13.37" fill="#3a3a3a" textLength="56.80" lengthAdjust="spacingAndGlyphs" stroke="#3a3a3a" stroke-width="0.45">8/06/2020</text>
<circle cx="1037" cy="951.80" r="8.2" fill="#f7b334"/><rect x="1036" y="946.30" width="2" height="7" fill="#fff"/><rect x="1036" y="954.80" width="2" height="2" fill="#fff"/>
<text x="1052.80" y="957.00" font-size="13.37" fill="#fff" textLength="63.91" lengthAdjust="spacingAndGlyphs" stroke="#fff" stroke-width="0.45">25/09/2020</text>
<text x="1139.30" y="957.00" font-size="13.37" fill="#3a3a3a" stroke="#3a3a3a" stroke-width="0.45" textLength="171.10" lengthAdjust="spacingAndGlyphs">DW/ETL for Wisoky - Phase 3</text>
<text x="1445.50" y="957.00" font-size="13.37" fill="#3a3a3a" stroke="#3a3a3a" stroke-width="0.45" textLength="70.30" lengthAdjust="spacingAndGlyphs">Davis-Kirlin</text>
<rect x="1653.00" y="943.80" width="73.66" height="16.20" fill="#f2c811" />
<line x1="1653.5" y1="942.80" x2="1653.5" y2="960.80" stroke="#555" stroke-width="0.8" stroke-dasharray="1 1.5"/>
<text x="1697.00" y="957.00" font-size="13.37" fill="#2a2a2a" stroke="#2a2a2a" stroke-width="0.45" textLength="51.50" lengthAdjust="spacingAndGlyphs">$182.000</text>
<text x="1760.90" y="957.00" font-size="13.37" fill="#3a3a3a" stroke="#3a3a3a" stroke-width="0.45" textLength="86.40" lengthAdjust="spacingAndGlyphs">CRM Dynamics</text>
<text x="1927.20" y="957.00" font-size="13.37" fill="#3a3a3a" stroke="#3a3a3a" stroke-width="0.45" textLength="51.80" lengthAdjust="spacingAndGlyphs">1-Qualify</text>
</g>
<polyline points="2008.5,706 2012.4,701.5 2016.3,706" fill="none" stroke="#444" stroke-width="1.4"/>
<polyline points="2008.5,932.5 2012.4,937 2016.3,932.5" fill="none" stroke="#444" stroke-width="1.4"/>
<rect x="2007.50" y="720.00" width="9.00" height="54.70" fill="#c8c8c8" />
<circle cx="2010" cy="986" r="9" fill="#f2c811"/>
</svg></body></html>
